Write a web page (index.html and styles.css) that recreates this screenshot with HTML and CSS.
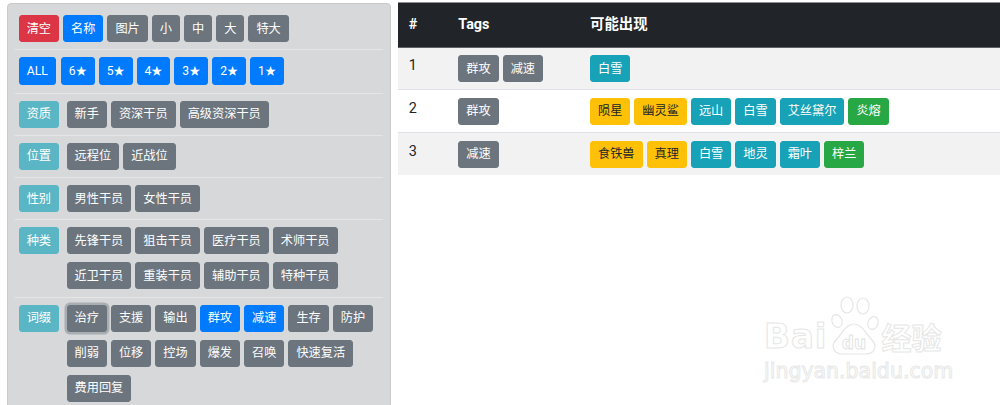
FILE: index.html
```html
<!DOCTYPE html>
<html lang="zh-CN">
<head>
    <meta charset="UTF-8">
    <meta name="viewport" content="width=device-width, initial-scale=1.0">
    <title>公开招募</title>
    <link rel="stylesheet" href="styles.css">
</head>
<body>

    <div class="page">
        <!-- filter panel -->
        <div class="filter-panel">
            <div class="filter-row">
                <div class="btn-group">
                    <span class="btn btn-danger">清空</span>
                    <span class="btn btn-primary">名称</span>
                    <span class="btn btn-secondary">图片</span>
                    <span class="btn btn-secondary">小</span>
                    <span class="btn btn-secondary">中</span>
                    <span class="btn btn-secondary">大</span>
                    <span class="btn btn-secondary">特大</span>
                </div>
            </div>
            <div class="filter-row">
                <div class="btn-group">
                    <span class="btn btn-primary btn-all">ALL</span>
                    <span class="btn btn-primary">6<span class="star">★</span></span>
                    <span class="btn btn-primary">5<span class="star">★</span></span>
                    <span class="btn btn-primary">4<span class="star">★</span></span>
                    <span class="btn btn-primary">3<span class="star">★</span></span>
                    <span class="btn btn-primary">2<span class="star">★</span></span>
                    <span class="btn btn-primary">1<span class="star">★</span></span>
                </div>
            </div>
            <div class="filter-row">
                <span class="btn btn-label">资质</span>
                <div class="btn-group">
                    <span class="btn btn-secondary">新手</span>
                    <span class="btn btn-secondary">资深干员</span>
                    <span class="btn btn-secondary">高级资深干员</span>
                </div>
            </div>
            <div class="filter-row">
                <span class="btn btn-label">位置</span>
                <div class="btn-group">
                    <span class="btn btn-secondary">远程位</span>
                    <span class="btn btn-secondary">近战位</span>
                </div>
            </div>
            <div class="filter-row">
                <span class="btn btn-label">性别</span>
                <div class="btn-group">
                    <span class="btn btn-secondary">男性干员</span>
                    <span class="btn btn-secondary">女性干员</span>
                </div>
            </div>
            <div class="filter-row">
                <span class="btn btn-label">种类</span>
                <div class="btn-group">
                    <span class="btn btn-secondary">先锋干员</span>
                    <span class="btn btn-secondary">狙击干员</span>
                    <span class="btn btn-secondary">医疗干员</span>
                    <span class="btn btn-secondary">术师干员</span>
                    <span class="btn btn-secondary">近卫干员</span>
                    <span class="btn btn-secondary">重装干员</span>
                    <span class="btn btn-secondary">辅助干员</span>
                    <span class="btn btn-secondary">特种干员</span>
                </div>
            </div>
            <div class="filter-row">
                <span class="btn btn-label">词缀</span>
                <div class="btn-group">
                    <span class="btn btn-secondary focus">治疗</span>
                    <span class="btn btn-secondary">支援</span>
                    <span class="btn btn-secondary">输出</span>
                    <span class="btn btn-primary">群攻</span>
                    <span class="btn btn-primary">减速</span>
                    <span class="btn btn-secondary">生存</span>
                    <span class="btn btn-secondary">防护</span>
                    <span class="btn btn-secondary">削弱</span>
                    <span class="btn btn-secondary">位移</span>
                    <span class="btn btn-secondary">控场</span>
                    <span class="btn btn-secondary">爆发</span>
                    <span class="btn btn-secondary">召唤</span>
                    <span class="btn btn-secondary">快速复活</span>
                    <span class="btn btn-secondary">费用回复</span>
                </div>
            </div>
        </div>

        <!-- result table -->
        <table class="result-table">
            <colgroup>
                <col class="col-num">
                <col class="col-tags">
                <col>
            </colgroup>
            <thead>
                <tr>
                    <th>#</th>
                    <th>Tags</th>
                    <th>可能出现</th>
                </tr>
            </thead>
            <tbody>
                <tr>
                    <td>1</td>
                    <td>
                        <div class="btn-group">
                            <span class="btn btn-secondary">群攻</span>
                            <span class="btn btn-secondary">减速</span>
                        </div>
                    </td>
                    <td>
                        <div class="btn-group">
                            <span class="btn btn-info">白雪</span>
                        </div>
                    </td>
                </tr>
                <tr>
                    <td>2</td>
                    <td>
                        <div class="btn-group">
                            <span class="btn btn-secondary">群攻</span>
                        </div>
                    </td>
                    <td>
                        <div class="btn-group">
                            <span class="btn btn-warning">陨星</span>
                            <span class="btn btn-warning">幽灵鲨</span>
                            <span class="btn btn-info">远山</span>
                            <span class="btn btn-info">白雪</span>
                            <span class="btn btn-info">艾丝黛尔</span>
                            <span class="btn btn-success">炎熔</span>
                        </div>
                    </td>
                </tr>
                <tr>
                    <td>3</td>
                    <td>
                        <div class="btn-group">
                            <span class="btn btn-secondary">减速</span>
                        </div>
                    </td>
                    <td>
                        <div class="btn-group">
                            <span class="btn btn-warning">食铁兽</span>
                            <span class="btn btn-warning">真理</span>
                            <span class="btn btn-info">白雪</span>
                            <span class="btn btn-info">地灵</span>
                            <span class="btn btn-info">霜叶</span>
                            <span class="btn btn-success">梓兰</span>
                        </div>
                    </td>
                </tr>
            </tbody>
        </table>
    </div>

    <!-- faint watermark in the corner -->
    <div class="watermark">
        <div class="wm-logo">
            <span class="wm-bai">Bai</span>
            <svg class="wm-paw" width="52" height="62" viewBox="0 0 52 62">
                <ellipse cx="9" cy="27" rx="5" ry="6.5" transform="rotate(-20 9 27)"/>
                <ellipse cx="19" cy="11" rx="6" ry="8"/>
                <ellipse cx="35" cy="12" rx="6" ry="8"/>
                <ellipse cx="45" cy="29" rx="5" ry="6.5" transform="rotate(20 45 29)"/>
                <path d="M26 30 C18 30 14 40 8 46 C2 52 6 60 14 60 L38 60 C46 60 50 52 44 46 C38 40 34 30 26 30 Z"/>
                <text x="26" y="55" text-anchor="middle">du</text>
            </svg>
            <span class="wm-cn">经验</span>
        </div>
        <div class="wm-url">jingyan.baidu.com</div>
    </div>

</body>
</html>
```

FILE: styles.css
```css
/* page */
body {
    margin: 0;
    background-color: #fff;
    color: #212529;
    font-family: "Segoe UI", Roboto, Arial, "Noto Sans CJK SC", sans-serif;
    font-size: 14.4px;
    overflow: hidden;
}

.page {
    display: flex;
    align-items: flex-start;
    gap: 7px;
    padding: 3px 0 0 7px;
}

/* buttons (bootstrap btn-sm look) */
.btn {
    display: inline-block;
    font-size: 12.2px;
    line-height: 18px;
    padding: 3.5px 7px;
    border: 1px solid transparent;
    border-radius: 3px;
    color: #fff;
    white-space: nowrap;
}

.star {
    font-size: 11px;
}

.btn-primary {
    background-color: #007bff;
    border-color: #007bff;
}

.btn-secondary {
    background-color: #6c757d;
    border-color: #6c757d;
}

.btn-danger {
    background-color: #dc3545;
    border-color: #dc3545;
}

.btn-info {
    background-color: #17a2b8;
    border-color: #17a2b8;
}

.btn-warning {
    background-color: #ffc107;
    border-color: #ffc107;
    color: #212529;
}

.btn-success {
    background-color: #28a745;
    border-color: #28a745;
}

/* disabled-looking info button used as row label */
.btn-label {
    background-color: #5ab5c4;
    border-color: #5ab5c4;
    margin-right: 7.5px;
    flex-shrink: 0;
}

.focus {
    box-shadow: 0 0 0 2.5px rgba(150, 156, 162, 0.7);
}

.btn-group {
    display: flex;
    flex-wrap: wrap;
    gap: 8px 4px;
}

.btn-all {
    margin-right: 1px;
}

/* filter panel on the left */
.filter-panel {
    width: 368px;
    flex-shrink: 0;
    padding: 4px 7px 7px 7px;
    background-color: #d7d8da;
    border: 1px solid #c8cacc;
    border-radius: 4px;
}

.filter-row {
    display: flex;
    align-items: flex-start;
    padding: 7px 3.7px 7.3px 3.7px;
    border-bottom: 1px solid #e5e6e8;
}

/* result table on the right */
.result-table {
    flex: 1;
    border-collapse: collapse;
    table-layout: fixed;
    margin-top: -1px;
}

.col-num {
    width: 49.5px;
}

.col-tags {
    width: 131.7px;
}

.result-table th {
    text-align: left;
    font-weight: bold;
    color: #fff;
    background-color: #212529;
    line-height: 21.6px;
    padding: 11px 10.8px;
    border-top: 1px solid #8d9093;
    border-bottom: 1px solid #5b6166;
}

.result-table td {
    vertical-align: top;
    line-height: 21.6px;
    padding: 7.5px 10.8px 7.3px 10.8px;
    border-top: 1px solid #dee2e6;
}

.result-table tbody tr:nth-child(odd) {
    background-color: #f2f2f2;
}

/* watermark */
.watermark {
    position: absolute;
    left: 764px;
    top: 294px;
    color: #fff;
    font-family: "DejaVu Sans", sans-serif;
    font-weight: bold;
}

.wm-logo {
    display: flex;
    align-items: flex-end;
}

.wm-bai {
    font-size: 34px;
    line-height: 40px;
    letter-spacing: 1px;
    -webkit-text-stroke: 1px #e6e6e6;
}

.wm-paw {
    margin: 0 2px 0 0;
}

.wm-paw ellipse,
.wm-paw path {
    fill: #fff;
    stroke: #e6e6e6;
    stroke-width: 1.2;
}

.wm-paw text {
    font-size: 17px;
    font-weight: bold;
    fill: #fff;
    stroke: #e2e2e2;
    stroke-width: 0.9;
}

.wm-cn {
    font-family: "Noto Sans CJK SC", sans-serif;
    font-size: 30px;
    line-height: 40px;
    -webkit-text-stroke: 1px #e6e6e6;
}

.wm-url {
    font-family: "DejaVu Sans", sans-serif;
    font-weight: normal;
    font-size: 20.5px;
    line-height: 26px;
    margin-top: 2px;
    -webkit-text-stroke: 1px #e8e8e8;
}
```
